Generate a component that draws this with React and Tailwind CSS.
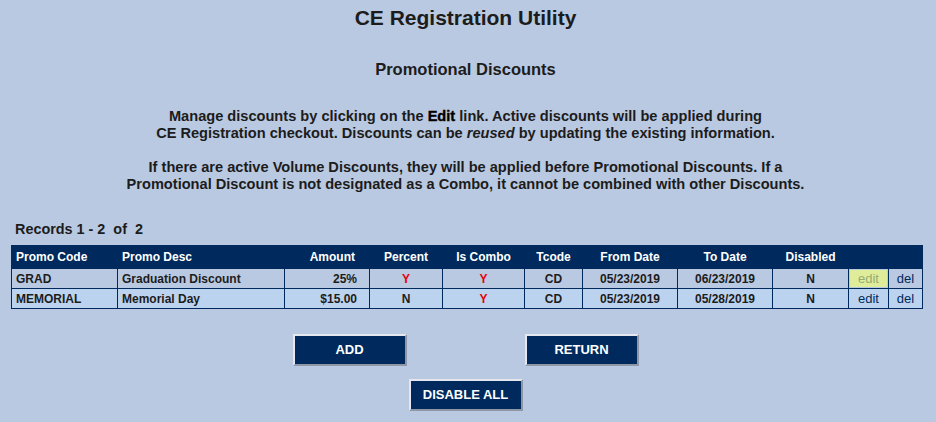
import React from "react";

const cols = [106, 167, 85, 73, 82, 58, 95, 95, 76, 40, 34];

const rows = [
  { code: "GRAD", desc: "Graduation Discount", amount: "25%", percent: "Y", combo: "Y", tcode: "CD", from: "05/23/2019", to: "06/23/2019", disabled: "N", hl: true, bg: "bg-[#b9c9e1]" },
  { code: "MEMORIAL", desc: "Memorial Day", amount: "$15.00", percent: "N", combo: "Y", tcode: "CD", from: "05/23/2019", to: "05/28/2019", disabled: "N", hl: false, bg: "bg-[#bcd3ef]" },
];

function YN({ v }) {
  return <span className={v === "Y" ? "text-[#e8000b]" : "text-[#1c1c1c]"}>{v}</span>;
}

function Btn({ children }) {
  return (
    <button className="h-[32px] w-[114px] bg-[#002a5e] text-[13px] leading-[16px] font-bold text-white border-2 border-t-[#e4e8ee] border-l-[#e4e8ee] border-r-[#8d97a6] border-b-[#8d97a6]">
      {children}
    </button>
  );
}

export default function App() {
  return (
    <div className="min-h-[422px] w-full bg-[#b9c9e1] text-[#1c1c1c] font-['Liberation_Sans',Arial,sans-serif]">
      <div className="w-[931px] flex flex-col items-center">
        <h1 className="mt-[6px] text-[21px] leading-[24px] font-bold">CE Registration Utility</h1>
        <h2 className="mt-[29px] text-[16.5px] leading-[20px] font-bold">Promotional Discounts</h2>
        <p className="mt-[29px] text-center text-[14.6px] leading-[17px] font-bold">
          Manage discounts by clicking on the{" "}
          <span className="text-black [-webkit-text-stroke:0.35px_black]">Edit</span> link. Active discounts will be applied during
          <br />
          CE Registration checkout. Discounts can be <i>reused</i> by updating the existing information.
          <br />
          <br />
          If there are active Volume Discounts, they will be applied before Promotional Discounts. If a
          <br />
          Promotional Discount is not designated as a Combo, it cannot be combined with other Discounts.
        </p>
        <div className="self-start mt-[28px] pl-[15px] text-[14.4px] leading-[17px] font-bold whitespace-pre">
          {"Records 1 - 2  of  2"}
        </div>
        <table className="self-start ml-[11px] mt-[7px] table-fixed border-collapse w-[911px] text-[12px] leading-[16px] font-bold">
          <colgroup>
            {cols.map((w, i) => (
              <col key={i} style={{ width: w }} />
            ))}
          </colgroup>
          <thead>
            <tr className="h-[23px] bg-[#002a5e] text-white">
              <th className="border border-[#002a5e] px-[4px] py-0 text-left">Promo Code</th>
              <th className="border border-[#002a5e] px-[4px] py-0 text-left">Promo Desc</th>
              <th className="border border-[#002a5e] pr-[14px] py-0 text-right">Amount</th>
              <th className="border border-[#002a5e] py-0 text-center">Percent</th>
              <th className="border border-[#002a5e] py-0 text-center">Is Combo</th>
              <th className="border border-[#002a5e] py-0 text-center">Tcode</th>
              <th className="border border-[#002a5e] py-0 text-center">From Date</th>
              <th className="border border-[#002a5e] py-0 text-center">To Date</th>
              <th className="border border-[#002a5e] py-0 text-center">Disabled</th>
              <th className="border border-[#002a5e] py-0"></th>
              <th className="border border-[#002a5e] py-0"></th>
            </tr>
          </thead>
          <tbody>
            {rows.map((r) => (
              <tr key={r.code} className={`h-[20px] ${r.bg}`}>
                <td className="border border-[#002a5e] px-[4px] py-0 text-left">{r.code}</td>
                <td className="border border-[#002a5e] px-[4px] py-0 text-left">{r.desc}</td>
                <td className="border border-[#002a5e] pr-[12px] py-0 text-right">{r.amount}</td>
                <td className="border border-[#002a5e] py-0 text-center"><YN v={r.percent} /></td>
                <td className="border border-[#002a5e] py-0 text-center"><YN v={r.combo} /></td>
                <td className="border border-[#002a5e] py-0 text-center">{r.tcode}</td>
                <td className="border border-[#002a5e] py-0 text-center">{r.from}</td>
                <td className="border border-[#002a5e] py-0 text-center">{r.to}</td>
                <td className="border border-[#002a5e] py-0 text-center">{r.disabled}</td>
                <td className="border border-[#002a5e] p-[1px] text-center text-[13px] font-normal">
                  {r.hl ? (
                    <div className="h-[17px] leading-[17px] bg-[#dfed9b] text-[#98ab72]">edit</div>
                  ) : (
                    <span className="text-[#002a5e]">edit</span>
                  )}
                </td>
                <td className="border border-[#002a5e] py-0 text-center text-[13px] font-normal text-[#002a5e]">del</td>
              </tr>
            ))}
          </tbody>
        </table>
        <div className="mt-[25px] flex gap-[118px]">
          <Btn>ADD</Btn>
          <Btn>RETURN</Btn>
        </div>
        <div className="mt-[13px]">
          <Btn>DISABLE ALL</Btn>
        </div>
      </div>
    </div>
  );
}
